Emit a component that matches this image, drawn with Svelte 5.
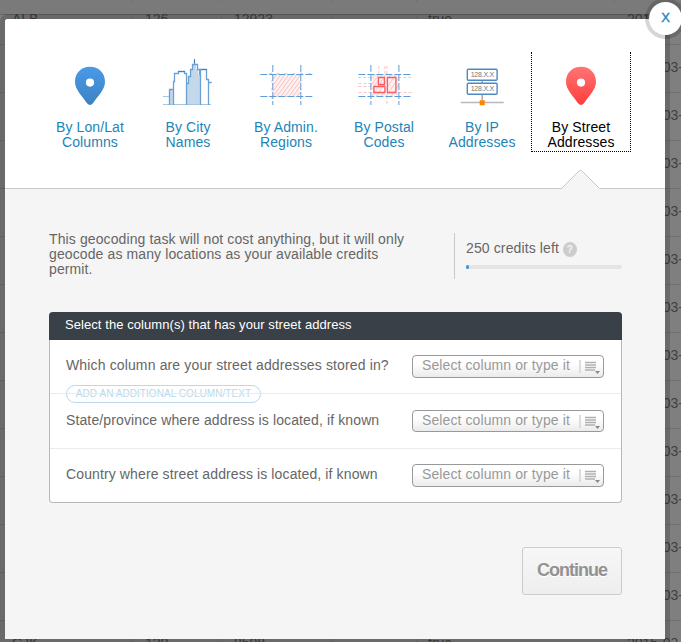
<script>
  const rows = Array.from({ length: 14 }, (_, i) =>
    i === 0 ? ['ALB', '126', '12923', 'true', '2015-03-11']
    : i === 13 ? ['CJK', '120', '8508', 'true', '2015-03-11']
    : ['', '', '', '', '2015-03-11']);
  const tabs = [
    { icon: 'pin', a: 'By Lon/Lat', b: 'Columns' },
    { icon: 'city', a: 'By City', b: 'Names' },
    { icon: 'admin', a: 'By Admin.', b: 'Regions' },
    { icon: 'postal', a: 'By Postal', b: 'Codes' },
    { icon: 'ip', a: 'By IP', b: 'Addresses' },
    { icon: 'street', a: 'By Street', b: 'Addresses' }
  ];
  const fields = [
    { q: 'Which column are your street addresses stored in?', s: 0.14, more: true },
    { q: 'State/province where address is located, if known', s: 0.12 },
    { q: 'Country where street address is located, if known', s: 0.12 }
  ];
</script>

<div class="page">
  <div class="backdrop">
    <div class="thead"><i></i><i></i><i></i><i></i><i></i></div>
    {#each rows as row}
      <div class="tr">{#each row as cell}<span>{cell}</span>{/each}</div>
    {/each}
  </div>

  <div class="modal">
    <nav>
      {#each tabs as t}
        <div class="tab" class:active={t.icon === 'street'}>
          <svg width="60" height="54" viewBox="0 0 60 54" fill="none">
            {#if t.icon === 'pin' || t.icon === 'street'}
              <defs>
                <linearGradient id={'g-' + t.icon} x1="0" y1="0" x2="0" y2="1">
                  <stop offset="0" stop-color={t.icon === 'pin' ? '#4a9ae8' : '#ff7474'} />
                  <stop offset="1" stop-color={t.icon === 'pin' ? '#3b82c0' : '#ff3d3d'} />
                </linearGradient>
              </defs>
              <path transform="translate(0 .8)" fill={`url(#g-${t.icon})`} fill-rule="evenodd" d="M30 14C21.500 14 15 20 15 29C15 37 22 43 27 50.500Q30 54 33 50.500C38 43 45 37 45 29C45 20 38.500 14 30 14ZM30 25.700a4.100 4.100 0 1 1 0 8.200a4.100 4.100 0 1 1 0-8.200Z" />
            {:else if t.icon === 'city'}
              <g transform="translate(1 1)">
                <path fill="#c4d8eb" d="M11 36h4v16h-4zM27 52V30h2v-6h2v-8h2v-5h4v5h2v6h2v30z" />
                <path stroke="#a6c6e2" d="M4 43.500h6M4 51.500h48M50 29.500h3" />
                <path stroke="#6ba1d2" stroke-width="1.300" d="M10.500 52V36.500H15M14.500 52V28.500h1v-8h4v-2h6v2h2V52M27.500 30.500h2v-7h2v-7h2v-5h2v-4v4h3v5h2v5h1V52M41.500 52V16.500h6v10h2V52M49.500 29.500h3" />
                <path stroke="#3c82c4" d="M19 18.500h7M42 16.500h6M35.500 6v4" />
              </g>
            {:else if t.icon === 'admin'}
              <g transform="translate(.3 0)">
                <path fill="#fff0f0" d="M16 22h28v22H16z" />
                <path stroke="#f9c2c5" d="M17 27l4-5M17 33l8-11M17 39l12-17M17 44l16-22M21 44l16-22M25 44l16-22M29 44l15-21M33 44l11-15M37 44l7-10M41 44l3-4" />
                <path stroke="#fbcdd0" stroke-dasharray="3 5" d="M12 21.500h43M12 44.500h43M15.500 20v32M44.500 20v32" />
                <path stroke="#5b9cdb" stroke-dasharray="7 2" d="M4 22.500h53M4 44.500h53M16.500 13v40M44.500 13v40" />
              </g>
            {:else if t.icon === 'postal'}
              <g transform="translate(.4 0)">
                <path stroke="#ffc4c6" stroke-dasharray="3 2" d="M4 25.500h53M4 31.500h13M4 34.500h13M4 40.500h53M24.500 14v10M30.500 14v10M32.500 14v39" />
                <path fill="#fff0f0" d="M17 23h27v21H17z" />
                <path stroke="#fac5c8" d="M17 27l4-5M17 33l8-11M18 37l9-14M18 44l13-21M22 44l14-21M27 44l14-21M32 44l12-18M37 44l7-11" />
                <path stroke="#5b9cdb" stroke-dasharray="7 2" d="M4 22.500h53M4 44.500h53M16.500 13v40M44.500 13v40" />
                <path stroke="#fa5c61" stroke-width="1.300" d="M24 25.500h6v7h-6zM19.500 34.500h11v6h-11zM33 25.500h8.500v15H33z" />
              </g>
            {:else}
              <g transform="translate(.7 0)">
                <path stroke="#9a9a9a" stroke-width="1.300" d="M29.500 28v20" />
                <path stroke="#b8b8b8" stroke-width="1.700" d="M8 50.500h43" />
                <rect x="14.600" y="17.300" width="29.800" height="11" rx="1" fill="#fff" stroke="#4d8ac2" stroke-width="1.400" />
                <rect x="14.600" y="31.300" width="29.800" height="11" rx="1" fill="#fff" stroke="#4d8ac2" stroke-width="1.400" />
                <text x="18" y="25.300" textLength="23.500">128.X.X</text>
                <text x="18" y="39.400" textLength="23.500">128.X.X</text>
                <rect x="27" y="48.200" width="5" height="5" fill="#ff8500" />
              </g>
            {/if}
          </svg>
          <div class="label">{t.a}<br />{t.b}</div>
        </div>
      {/each}
      <svg class="notch" width="40" height="20" viewBox="0 0 40 20">
        <path d="M0 20L1 18.500L19 .5H21L39 18.500L40 20Z" fill="#f5f5f5" />
        <path d="M.5 18.500L18.500 .5H20.500L38.500 18.500" fill="none" stroke="#c8c8c8" />
      </svg>
    </nav>

    <section class="summary">
      <p>This geocoding task will not cost anything, but it will only<br />geocode as many locations as your available credits<br />permit.</p>
      <div class="credits">
        <div class="left"><span>250 credits left</span><b>?</b></div>
        <div class="bar"><i></i></div>
      </div>
    </section>

    <section class="card">
      <header>Select the column(s) that has your street address</header>
      {#each fields as f}
        <div class="field">
          <span class="q" style:letter-spacing={f.s + 'px'}>{f.q}</span>
          <div class="select">
            <span>Select column or type it</span>
            <i></i>
            <svg width="16" height="15" viewBox="0 0 16 15">
              <path d="M0 1.500h11M0 4h11M0 6.500h11M0 9h10" stroke="#aeb1b4" stroke-width="1.500" />
              <path d="M10 10h5l-2.500 3z" fill="#888" />
            </svg>
          </div>
          {#if f.more}<div class="more">ADD AN ADDITIONAL COLUMN/TEXT</div>{/if}
        </div>
      {/each}
    </section>

    <div class="actions"><button>Continue</button></div>
    <div class="close">X</div>
  </div>
</div>

<style>
  :global(body) { margin: 0; }
  .page {
    position: relative; width: 681px; height: 642px; overflow: hidden;
    background: #7f7f7f; font: 14px/15px "Liberation Sans", Arial, sans-serif; color: #666;
  }
  .backdrop { position: absolute; inset: 0; color: #414141; }
  .thead, .tr { display: grid; grid-template-columns: 133px 89px 111px 84px 198px 90px; width: 705px; box-sizing: border-box; }
  .thead { height: 15px; background: #7a7a7a; border-bottom: 1px solid #676767; }
  .thead i { height: 2px; border-right: 1px solid #707070; }
  .tr { height: 48px; border-bottom: 1px solid #707070; }
  .tr:nth-child(2) { height: 30px; }
  .tr:nth-child(2) span { padding-top: 0; line-height: 8px; }
  .tr span { padding: 14px 0 0 12px; border-right: 1px solid #747474; line-height: 16px; white-space: nowrap; }
  .tr span:nth-child(4) { padding-left: 95px; margin-right: -198px; border-right: 0; }
  .tr span:nth-child(4) { border-left: 1px solid #747474; margin-left: 83px; padding-left: 11px; }
  .tr span:last-child { grid-column: 6; border-right: 0; }

  .modal {
    position: absolute; left: 5px; top: 19px; width: 660px; height: 620px;
    background: #f5f5f5; box-shadow: 0 0 0 5px rgba(0, 0, 0, .16); border-radius: 3px 0 0 0;
    display: flex; flex-direction: column;
  }
  nav {
    position: relative; display: flex; height: 170px; padding: 33px 0 0 36px; box-sizing: border-box;
    background: #fff; border-bottom: 1px solid #c8c8c8; border-radius: 3px 0 0 0; flex: none;
  }
  .tab { width: 98px; height: 100px; box-sizing: border-box; text-align: center; color: #1d84b8; }
  .tab svg { display: block; margin: 0 auto; }
  .tab text { font: 7px "Liberation Sans", Arial, sans-serif; fill: #777; }
  .label { padding-top: 14px; letter-spacing: .1px; }
  .active { position: relative; width: 100px; color: #000; border: 1px dotted #000; border-top: 0; }
  .notch { position: absolute; left: 556px; top: 151px; }

  .summary { display: flex; justify-content: space-between; padding: 44px 43px 0 44px; height: 46px; flex: none; }
  .summary p { margin: -1px 0 0; letter-spacing: .11px; white-space: nowrap; }
  .credits { width: 156px; height: 46px; padding-left: 11px; border-left: 1px solid #c8c8c8; }
  .left { display: flex; align-items: center; gap: 4px; padding-top: 8px; height: 16px; white-space: nowrap; letter-spacing: .12px; }
  .left span { margin-top: -2px; }
  .left b { width: 14px; height: 15px; border-radius: 50%; background: #ccc; color: #f5f5f5; font-size: 10px; text-align: center; }
  .bar { margin-top: 8px; height: 4px; border-radius: 2px; background: #e4e4e4; }
  .bar i { display: block; width: 3px; height: 4px; border-radius: 2px; background: #3a98d5; }

  .card {
    margin: 33px 43px 0 44px; height: 191px; box-sizing: border-box; background: #fff;
    border: 1px solid #b8b8b8; border-top: 0; border-radius: 4px; flex: none;
  }
  .card header {
    margin: 0 -1px; height: 28px; padding-left: 16px; line-height: 26px; font-size: 13px;
    color: #fff; background: #394047; border-radius: 4px 4px 0 0; letter-spacing: .07px;
  }
  .field { position: relative; display: flex; justify-content: space-between; height: 53px; padding: 15px 17px 0 16px; box-sizing: border-box; }
  .field + .field { border-top: 1px solid #ebebeb; height: 55px; padding-top: 16px; }
  .field + .field .select { height: 22px; }
  .field:last-child { height: 54px; }
  .field + .field:last-child { padding-top: 15px; }
  .field:last-child .select { height: 23px; }
  .q { line-height: 21px; white-space: nowrap; }
  .select {
    display: flex; width: 192px; height: 23px; box-sizing: border-box; border: 1px solid #999;
    border-radius: 4px; background: linear-gradient(#fff 35%, #ebebeb); padding-left: 9px;
  }
  .select span { width: 157px; line-height: 18px; color: #999; white-space: nowrap; letter-spacing: .1px; }
  .select i { width: 2px; height: 13px; background: #ddd; margin: 4px 4px 0 0; }
  .select svg { margin-top: 5px; flex: none; }
  .more {
    position: absolute; left: 16px; top: 45px; width: 195px; height: 18px; box-sizing: border-box;
    border: 1px solid #bdd8ea; border-radius: 9px; color: #b8d8e9; font-size: 10px; line-height: 15px;
    text-align: center; white-space: nowrap; letter-spacing: .06px;
  }
  .actions { display: flex; justify-content: flex-end; padding: 44px 43px 0 0; }
  button {
    width: 100px; height: 48px; padding: 0 0 2px; border: 1px solid #ccc; border-radius: 3px;
    background: linear-gradient(#f7f7f7, #eee); color: #929292; font: bold 18px "Liberation Sans", Arial, sans-serif;
    letter-spacing: -1px; text-shadow: 0 1px #fff;
  }
  .close {
    position: absolute; left: 644px; top: -17px; width: 33px; height: 33px; border-radius: 50%;
    background: #fff; box-shadow: 0 0 0 4px rgba(0, 0, 0, .16); color: #1787c2;
    font-size: 13px; line-height: 32px; text-align: center; -webkit-text-stroke: .4px #1787c2;
  }
</style>
